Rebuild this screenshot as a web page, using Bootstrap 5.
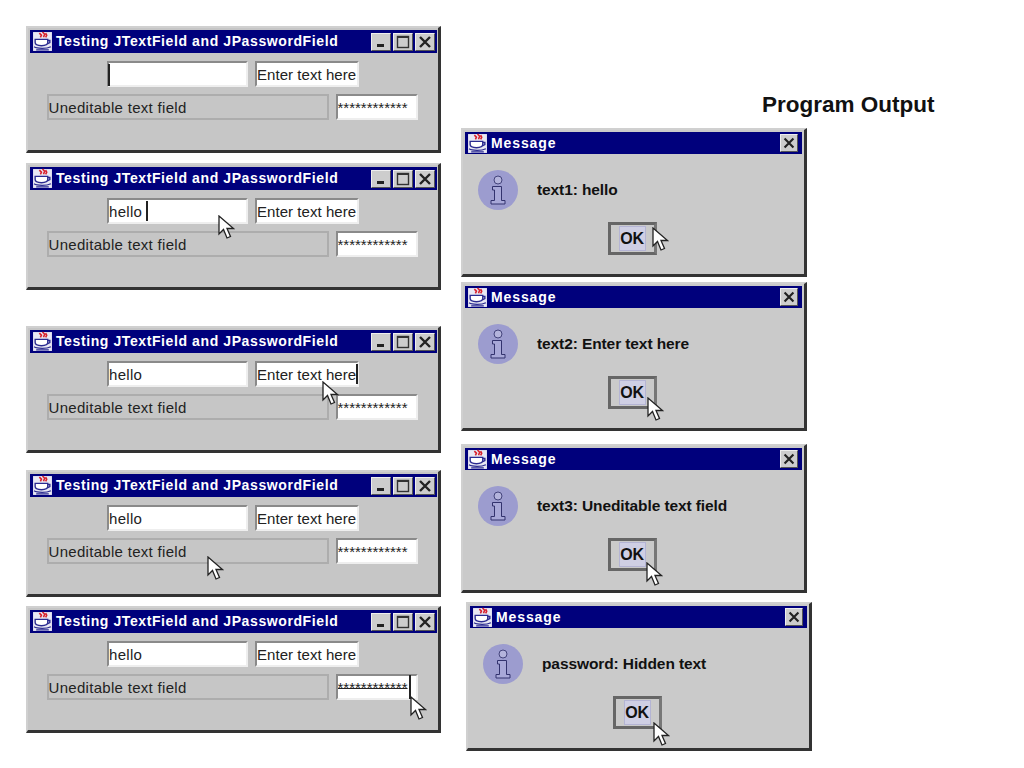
<!DOCTYPE html>
<html lang="en">
<head>
  <meta charset="UTF-8">
  <meta name="viewport" content="width=device-width, initial-scale=1.0">
  <title>Testing JTextField and JPasswordField</title>
  <link rel="stylesheet" href="https://cdn.jsdelivr.net/npm/bootstrap@5.3.3/dist/css/bootstrap.min.css">
  <style>
    body { background: #fff; color: #111; font-family: "Liberation Sans", Arial, sans-serif; overflow: hidden; }
    .desk { width: 1024px; height: 768px; }
    .out-label { left: 762px; top: 92px; font-size: 22.5px; font-weight: 700; color: #111; line-height: 26px; }
    .jwin { background: #c6c6c6; border-style: solid; border-width: 2px 3px 3px 2px; border-color: #d0d0d0 #333 #333 #d0d0d0; padding: 2px 1px 0 2px; }
    .jframe { width: 415px; height: 127px; }
    .jdialog { width: 346px; height: 149px; background: #cacaca; padding-right: 2px; }
    .jtitle { height: 23px; background: #00007c; color: #fff; font-size: 14px; font-weight: 700; letter-spacing: .6px; padding: 0 2px; white-space: nowrap; }
    .jdialog .jtitle { letter-spacing: .9px; height: 22px; padding-right: 4px; }
    .jtitle svg { display: block; }
    .jtitle svg.jcup { margin-right: 3px; }
    .jbtns { gap: 2px; }
    .jbtn { width: 20px; height: 18px; background: #cdcdcd; border: 1px solid; border-color: #eee #555 #555 #eee; }
    .jdialog .jbtn { width: 18px; }
    .jrows { padding: 8px 1px 0 0; gap: 7px; }
    .jrow { gap: 7px; }
    input.jfield { width: 141px; height: 26px; border-radius: 0; padding: 0; font-size: 15px; letter-spacing: .3px; color: #222; background: #fff; border: 2px solid; border-color: #8a8a8a #eee #eee #8a8a8a; box-shadow: none; }
    input.jtext2 { width: 104px; letter-spacing: .05px; }
    input.jlocked { width: 282px; background: #c6c6c6; border-color: #adadad; }
    input.jpass { width: 82px; letter-spacing: 0; margin-right: 2px; }
    input.jstruck { text-decoration: line-through; }
    .jinfo { margin: 16px 0 0 13px; gap: 19px; font-size: 15.5px; font-weight: 700; letter-spacing: -.1px; color: #111; }
    .jok-row { margin-top: 12px; padding-right: 3px; }
    .jok { width: 49px; height: 33px; padding: 3px 10px; border-radius: 0; background: #cacaca; border: 3px solid; border-color: #666 #777 #666 #666; color: #111; font-size: 16px; font-weight: 700; line-height: 20px; }
    .jok span { display: block; background: #cfcfe4; outline: 1px solid #b4b4d4; height: 23px; line-height: 23px; margin: -1px -1px 0; letter-spacing: -.3px; }
    .caret-bar { width: 2px; background: #222; }
    .pointer { width: 17px; height: 25px; }
  </style>
</head>
<body>
  <div class="desk position-relative" id="desk">
    <div class="out-label position-absolute">Program Output</div>
  </div>
  <script src="https://cdn.jsdelivr.net/npm/bootstrap@5.3.3/dist/js/bootstrap.bundle.min.js"></script>
  <script>
    const frames = [
      { x: 26, y: 26, text1: '' },
      { x: 26, y: 163, text1: 'hello' },
      { x: 26, y: 326, text1: 'hello' },
      { x: 26, y: 470, text1: 'hello' },
      { x: 26, y: 606, text1: 'hello', struck: true }
    ];
    const dialogs = [
      { x: 461, y: 128, msg: 'text1: hello' },
      { x: 461, y: 282, msg: 'text2: Enter text here' },
      { x: 461, y: 444, msg: 'text3: Uneditable text field' },
      { x: 466, y: 602, msg: 'password: Hidden text' }
    ];
    const carets = [
      { x: 108, y: 64, h: 22 }, { x: 146, y: 201, h: 20 }, { x: 356, y: 364, h: 20 }, { x: 409, y: 675, h: 24 }
    ];
    const pointers = [
      [218, 215], [322, 381], [207, 556], [410, 696], [652, 227], [647, 397], [646, 562], [653, 722]
    ];

    // little java cup from the title bar
    const cup = `<svg width="21" height="21" viewBox="0 0 20 20" class="jcup flex-shrink-0">
      <rect x="1" y="1" width="18" height="18" fill="#e8e8f4"/>
      <path d="M7 2l2 2-1 2M10 1l2 2-1 3M13 2l1 2-1 2" fill="none" stroke="#d8202c" stroke-width="1.5"/>
      <path d="M3 8h12v3c0 2-2 3-6 3s-6-1-6-3z" fill="#fff" stroke="#2a2a90" stroke-width="1.3"/>
      <path d="M15 9h2v2l-2 1M2 15c3 2 12 2 16 0M4 18h12" fill="none" stroke="#2a2a90" stroke-width="1.3"/>
    </svg>`;
    const minIcon = '<svg width="18" height="16" viewBox="0 0 18 16"><rect x="5" y="10" width="7" height="3" fill="#222"/></svg>';
    const maxIcon = '<svg width="18" height="16" viewBox="0 0 18 16"><rect x="3.500" y="2.500" width="11" height="11" fill="none" stroke="#333" stroke-width="1.400"/><path d="M3 3h12" stroke="#333" stroke-width="2"/></svg>';
    const closeIcon = '<svg width="100%" height="16" viewBox="0 0 18 16"><path d="M4 3l10 10M14 3L4 13" stroke="#222" stroke-width="2.400"/></svg>';
    const infoIcon = `<svg width="40" height="40" viewBox="0 0 40 40" class="flex-shrink-0">
      <circle cx="20" cy="20" r="20" fill="#9c9ccf"/>
      <circle cx="20" cy="10" r="4" fill="#b4b4dc" stroke="#44447c" stroke-width="1"/>
      <path d="M14.500 16.500h9v14h3.500v3.500h-14v-3.500h3.500v-10.500h-2z" fill="#a8a8d8" stroke="#33336e" stroke-width="1"/>
    </svg>`;
    const arrow = `<svg class="pointer position-absolute" viewBox="0 0 17 25">
      <path d="M1 1v18l4.500-4.500 3.500 8.500 3.500-1.500-3.500-8h6.500z" fill="#fff" stroke="#222" stroke-width="1.300"/>
    </svg>`;

    const desk = document.getElementById('desk');
    function addWin(cls, win, html) {
      const el = document.createElement('div');
      el.className = 'jwin position-absolute ' + cls;
      el.style.left = win.x + 'px';
      el.style.top = win.y + 'px';
      el.innerHTML = html;
      desk.appendChild(el);
    }

    frames.forEach(f => addWin('jframe', f, `
      <div class="jtitle d-flex align-items-center">${cup}<span class="flex-grow-1">Testing JTextField and JPasswordField</span>
        <div class="jbtns d-flex">
          <div class="jbtn">${minIcon}</div><div class="jbtn">${maxIcon}</div><div class="jbtn">${closeIcon}</div>
        </div>
      </div>
      <div class="jrows d-flex flex-column">
        <div class="jrow d-flex justify-content-center">
          <input class="form-control jfield" value="${f.text1}">
          <input class="form-control jfield jtext2" value="Enter text here">
        </div>
        <div class="jrow d-flex justify-content-center">
          <input class="form-control jfield jlocked" value="Uneditable text field" readonly>
          <input class="form-control jfield jpass${f.struck ? ' jstruck' : ''}" value="************">
        </div>
      </div>`));

    dialogs.forEach(d => addWin('jdialog', d, `
      <div class="jtitle d-flex align-items-center">${cup}<span class="flex-grow-1">Message</span>
        <div class="jbtn">${closeIcon}</div>
      </div>
      <div class="jinfo d-flex align-items-center">${infoIcon}<span>${d.msg}</span></div>
      <div class="jok-row d-flex justify-content-center">
        <button type="button" class="btn jok"><span>OK</span></button>
      </div>`));

    carets.forEach(c => {
      const bar = document.createElement('div');
      bar.className = 'caret-bar position-absolute';
      bar.style.left = c.x + 'px';
      bar.style.top = c.y + 'px';
      bar.style.height = c.h + 'px';
      desk.appendChild(bar);
    });
    pointers.forEach(p => {
      desk.insertAdjacentHTML('beforeend', arrow);
      desk.lastElementChild.style.left = p[0] + 'px';
      desk.lastElementChild.style.top = p[1] + 'px';
    });
  </script>
</body>
</html>
